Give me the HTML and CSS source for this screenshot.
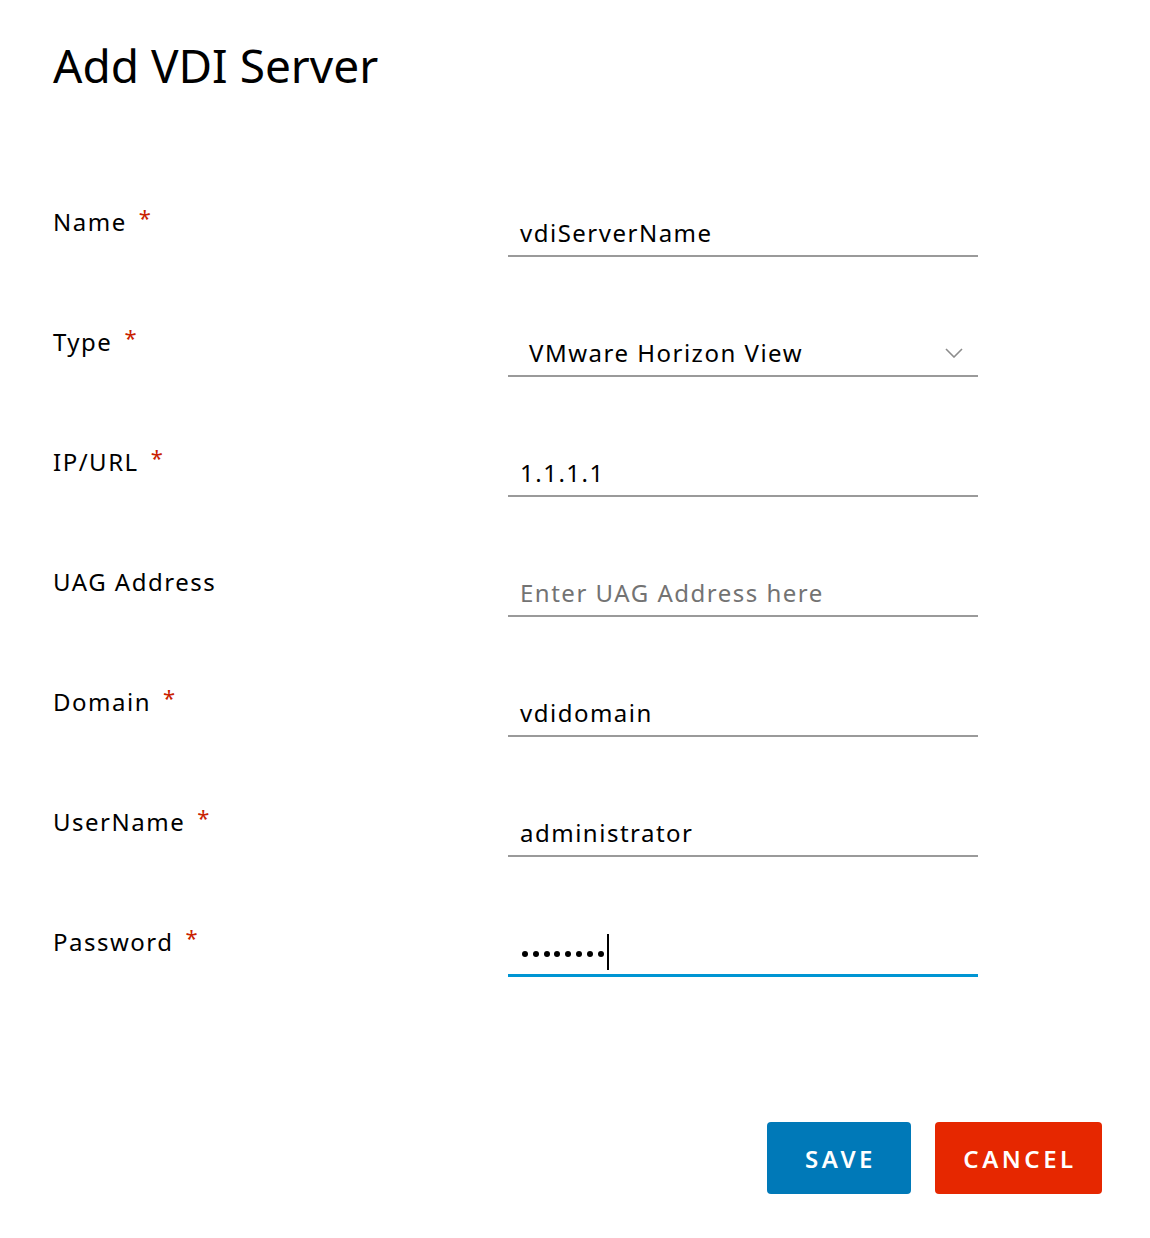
FILE: index.html
```html
<!DOCTYPE html>
<html>
<head>
<meta charset="utf-8">
<link rel="stylesheet" href="styles.css">
</head>
<body>
<div class="modal">
  <h1 class="title">Add VDI Server</h1>
  <form class="form">
    <div class="row">
      <div class="label">Name<span class="req">*</span></div>
      <div class="field"><span class="value">vdiServerName</span></div>
    </div>
    <div class="row">
      <div class="label">Type<span class="req">*</span></div>
      <div class="field select"><span class="value">VMware Horizon View</span>
        <svg class="chev" width="18" height="10" viewBox="0 0 18 10"><path d="M1 1 L9 9 L17 1" fill="none" stroke="#8c8c8c" stroke-width="1.6"/></svg>
      </div>
    </div>
    <div class="row">
      <div class="label">IP/URL<span class="req">*</span></div>
      <div class="field"><span class="value">1.1.1.1</span></div>
    </div>
    <div class="row">
      <div class="label">UAG Address</div>
      <div class="field"><span class="value placeholder">Enter UAG Address here</span></div>
    </div>
    <div class="row">
      <div class="label">Domain<span class="req">*</span></div>
      <div class="field"><span class="value">vdidomain</span></div>
    </div>
    <div class="row">
      <div class="label">UserName<span class="req">*</span></div>
      <div class="field"><span class="value">administrator</span></div>
    </div>
    <div class="row">
      <div class="label">Password<span class="req">*</span></div>
      <div class="field focused"><span class="dots"><i></i><i></i><i></i><i></i><i></i><i></i><i></i><i></i></span><span class="caret"></span></div>
    </div>
  </form>
  <div class="actions">
    <button class="btn btn-save" type="button">SAVE</button>
    <button class="btn btn-cancel" type="button">CANCEL</button>
  </div>
</div>
</body>
</html>
```
FILE: styles.css
```css
html, body {
  margin: 0;
  padding: 0;
  background: #ffffff;
}
body {
  font-family: "Noto Sans", "Open Sans", sans-serif;
  color: #000000;
  width: 1150px;
}
.modal {
  padding: 0 48px 0 53px;
}
.title {
  margin: 0;
  padding-top: 33px;
  font-size: 46px;
  font-weight: 400;
  line-height: 64px;
  letter-spacing: 0;
}
.form {
  margin-top: 103px;
}
.row {
  display: flex;
  align-items: flex-start;
  height: 120px;
}
.label {
  width: 455px;
  padding-top: 7px;
  font-size: 24px;
  line-height: 30px;
  letter-spacing: 1.5px;
}
.req {
  color: #c92100;
  font-size: 22px;
  margin-left: 12px;
  position: relative;
  top: -5px;
}
.field {
  width: 470px;
  box-sizing: border-box;
  padding: 16px 12px 6px;
  border-bottom: 2px solid #9a9a9a;
  font-size: 24px;
  line-height: 30px;
  letter-spacing: 1.5px;
  display: flex;
  align-items: center;
  height: 57px;
}
.select {
  padding-left: 21px;
  justify-content: space-between;
}
.chev {
  margin-right: 3px;
  margin-top: 0;
}
.placeholder {
  color: #737373;
}
.focused {
  border-bottom: 3px solid #0095d3;
  height: 57px;
  padding-left: 14px;
}
.dots {
  display: flex;
  gap: 4.8px;
  align-items: center;
  margin-top: 4px;
}
.dots i {
  display: block;
  width: 6px;
  height: 6px;
  border-radius: 50%;
  background: #000;
}
.caret {
  display: inline-block;
  width: 2px;
  height: 36px;
  background: #000;
  margin-left: 3px;
  margin-top: 0;
}
.actions {
  display: flex;
  justify-content: flex-end;
  gap: 24px;
  margin-top: 82px;
}
.btn {
  border: none;
  border-radius: 4px;
  height: 72px;
  color: #ffffff;
  font-family: "Noto Sans", "Open Sans", sans-serif;
  font-size: 24px;
  font-weight: 600;
  letter-spacing: 3.5px;
  padding: 0 0 0 3px;
  cursor: pointer;
}
.btn-save {
  background: #0079b8;
  width: 144px;
}
.btn-cancel {
  background: #e62700;
  width: 167px;
}
```
